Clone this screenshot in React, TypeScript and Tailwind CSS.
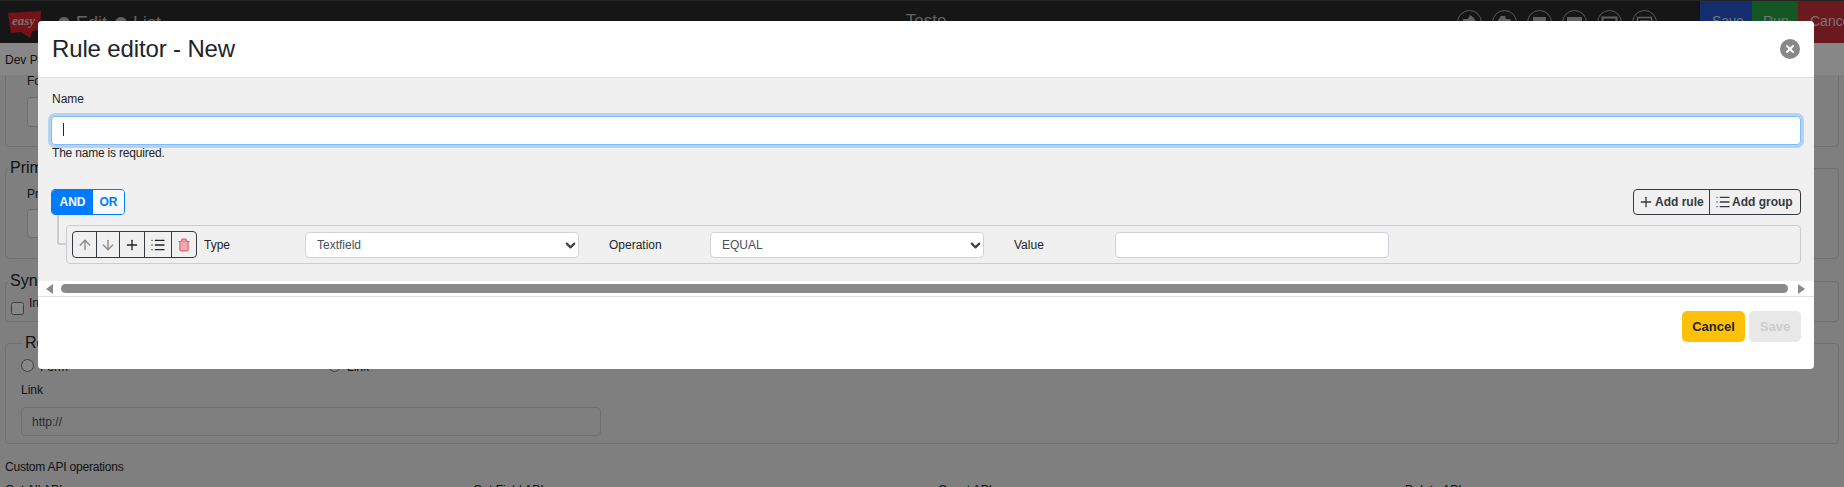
import { ArrowDown, ArrowUp, ChevronDown, List, Plus, Trash2, X } from 'lucide-react';

const TopIcon = ({ children }: { children: React.ReactNode }) => (
  <svg width="25" height="25" viewBox="0 0 25 25" className="shrink-0">
    <circle cx="12.5" cy="12.5" r="12" fill="none" stroke="#a8a8a8" />
    {children}
  </svg>
);

const RuleField = ({ label, children }: { label: string; children: React.ReactNode }) => (
  <div className="flex items-center">
    <span className="w-[101px] text-[12px] text-[#212529]">{label}</span>
    {children}
  </div>
);

const RuleSelect = ({ value }: { value: string }) => (
  <div className="relative">
    <select
      defaultValue={value}
      className="block appearance-none w-[274px] h-[26px] pl-[11px] text-[12px] text-[#495057] bg-white border border-[#ced4da] rounded-[4px]"
    >
      <option>{value}</option>
    </select>
    <ChevronDown size={15} strokeWidth={3.5} className="absolute right-px top-[6px] text-[#444] pointer-events-none" />
  </div>
);

const App = () => {
  return (
    <div className="relative h-screen overflow-hidden bg-[#f0f0f0] text-[12px] text-[#212529] font-['Liberation_Sans',Arial,sans-serif]">
      {/* page behind the modal */}
      <header className="flex h-[43px] bg-[#2a2a2a] border-t border-[#444]">
        <svg width="34" height="28" viewBox="0 0 34 28" className="ml-[8px] mt-[10px] shrink-0">
          <path d="M0 2 L33 0 L32 19 L24 20 L22 27 L13 21 L3 22 Z" fill="#d8262c" />
          <text x="4" y="14" fontSize="13" fontWeight="700" fontStyle="italic" fill="#ecd0d0" fontFamily="Liberation Serif, serif">easy</text>
        </svg>
        <div className="flex items-center ml-[16px] h-[44px] text-[18px] text-[#bbb]">
          <span className="w-[12px] h-[12px] rounded-full bg-[#bbb] mr-[6px]" />
          <span>Edit</span>
          <span className="w-[12px] h-[12px] rounded-full bg-[#bbb] ml-[8px] mr-[6px]" />
          <span>List</span>
        </div>
        <div className="flex-1 text-center text-[17px] text-[#bbb] pt-[7px] pl-[234px]">Teste</div>
        <div className="flex gap-[10px] mt-[9px] mr-[43px]">
          <TopIcon>
            <path d="M6 12 L6 9 L11 9 L13 5 L17 8 L19 12 L19 20 L6 20 Z" fill="#b8b8b8" />
          </TopIcon>
          <TopIcon>
            <path d="M6 10 L9 6 L13 6 L14 9 L18 9 L20 13 L20 20 L6 20 Z" fill="#b8b8b8" />
          </TopIcon>
          <TopIcon>
            <rect x="6" y="7" width="13" height="12" fill="#b8b8b8" />
          </TopIcon>
          <TopIcon>
            <rect x="5" y="7" width="15" height="12" fill="#b8b8b8" />
          </TopIcon>
          <TopIcon>
            <rect x="5.5" y="7.5" width="14" height="11" fill="none" stroke="#b8b8b8" strokeWidth="2" />
          </TopIcon>
          <TopIcon>
            <rect x="5.5" y="7.5" width="14" height="11" fill="none" stroke="#b8b8b8" strokeWidth="1.5" />
            <path d="M8 11 H17 M8 14 H14" stroke="#b8b8b8" strokeWidth="1.5" />
          </TopIcon>
        </div>
        <div className="flex text-[14px] text-[#ddd] overflow-hidden">
          <span className="w-[52px] pl-[12px] pt-[10px] bg-[#2455d1]">Save</span>
          <span className="w-[46px] pl-[11px] pt-[10px] bg-[#28a445]">Run</span>
          <span className="w-[46px] pl-[12px] pt-[10px] bg-[#c9313c] whitespace-nowrap overflow-hidden">Cancel</span>
        </div>
      </header>
      <div className="h-[32px] bg-white pl-[5px] pt-[8px]">Dev Project</div>

      <main className="pl-[5px] pr-[5px]">
        <section className="flex flex-col h-[72px] border border-[#d5d5d5] border-t-0 rounded-b-[4px] pl-[21px]">
          <div className="mt-[-3px]">Form</div>
          <div className="w-[574px] h-[30px] shrink-0 mt-[7px] border border-[#ced4da] rounded-[4px] bg-white" />
        </section>

        <div className="relative mt-[21px] h-[91px] border border-[#d5d5d5] rounded-[4px] pl-[21px] pt-[16px]">
          <span className="absolute left-[2px] top-[-13px] px-[2px] text-[16px] bg-[#f0f0f0]">Primary</span>
          <div>Primary key</div>
          <div className="w-[574px] h-[29px] mt-[6px] border border-[#ced4da] rounded-[4px] bg-white" />
        </div>

        <div className="relative mt-[22px] h-[41px] border border-[#d5d5d5] rounded-[4px] pl-[5px] pt-[19px]">
          <span className="absolute left-[2px] top-[-13px] px-[2px] text-[16px] bg-[#f0f0f0]">Sync</span>
          <label className="flex items-start gap-[5px]">
            <input type="checkbox" className="w-[13px] h-[13px] mt-[1px]" />
            <span className="mt-[-7px]">Include</span>
          </label>
        </div>

        <div className="relative mt-[21px] h-[101px] border border-[#d5d5d5] rounded-[4px] pl-[15px] pt-[15px]">
          <span className="absolute left-[17px] top-[-13px] px-[2px] text-[16px] bg-[#f0f0f0]">Rest</span>
          <div className="flex">
            <label className="flex items-start gap-[6px] w-[307px]">
              <input type="radio" name="rest" className="w-[13px] h-[13px]" />
              <span className="mt-[-1px]">Form</span>
            </label>
            <label className="flex items-start gap-[6px]">
              <input type="radio" name="rest" className="w-[13px] h-[13px]" />
              <span className="mt-[-1px]">Link</span>
            </label>
          </div>
          <div className="mt-[5px]">Link</div>
          <input
            readOnly
            value="http://"
            className="block w-[580px] h-[29px] mt-[8px] px-[10px] text-[12px] text-[#495057] bg-[#f0f0f0] border border-[#ced4da] rounded-[4px]"
          />
        </div>

        <div className="mt-[14px] tracking-[-0.2px]">Custom API operations</div>
        <div className="grid grid-cols-[468px_465px_467px_auto] mt-[5px]">
          <span>Get All API</span>
          <span>Get Field API</span>
          <span>Count API</span>
          <span>Delete API</span>
        </div>
      </main>

      <div className="absolute inset-0 bg-black/47" />

      {/* modal */}
      <div className="absolute left-[38px] top-[21px] w-[1776px] h-[348px] flex flex-col bg-white rounded-[4px] overflow-hidden">
        <div className="flex items-center justify-between h-[57px] pl-[14px] pr-[14px] border-b border-[#dee2e6]">
          <h4 className="pb-[2px] text-[24px] leading-[29px] tracking-[-0.14px] text-[#212529]">Rule editor - New</h4>
          <span className="flex items-center justify-center w-[20px] h-[20px] rounded-full bg-[#888]">
            <X size={12} strokeWidth={4} className="text-white" />
          </span>
        </div>

        <div className="h-[203px] shrink-0 bg-[#f0f0f0] px-[13px] pt-[12px]">
          <label className="block pl-px leading-[18px]">Name</label>
          <div className="relative mt-[8px]">
            <input className="block w-full h-[29px] px-[11px] bg-white border border-[#80bdff] rounded-[4px] shadow-[0_0_0_3px_rgba(0,123,255,0.25)] outline-none" />
            <span className="absolute left-[12px] top-[7px] w-px h-[13px] bg-[#212529]" />
          </div>
          <div className="pl-px leading-[16px] tracking-[-0.2px]">The name is required.</div>

          <div className="relative mt-[28px]">
            <div className="flex items-start justify-between h-[36px]">
              <div className="flex h-[26px] font-bold rounded-[4px] overflow-hidden border border-[#007bff]">
                <span className="flex items-center justify-center w-[41px] bg-[#007bff] text-white">AND</span>
                <span className="flex items-center justify-center w-[31px] bg-[#f8f9fa] text-[#007bff]">OR</span>
              </div>
              <div className="flex h-[26px] font-bold text-[#343a40] border border-[#343a40] rounded-[4px]">
                <span className="flex items-center gap-[1px] w-[76px] pl-[4px] border-r border-[#343a40]">
                  <Plus size={16} />
                  Add rule
                </span>
                <span className="flex items-center gap-[1px] w-[90px] pl-[5px]">
                  <List size={16} />
                  Add group
                </span>
              </div>
            </div>

            <span className="absolute left-[6px] top-[26px] w-[10px] h-[30px] border-l-2 border-b-2 border-[#ccc] rounded-bl-[3px]" />

            <div className="flex items-center ml-[15px] h-[39px] border border-[#ccc] rounded-[4px] pl-[5px]">
              <div className="flex h-[27px] mr-[7px] border border-[#343a40] rounded-[4px]">
                <span className="flex items-center justify-center w-[24px] border-r border-[#343a40] text-[#888]">
                  <ArrowUp size={16} />
                </span>
                <span className="flex items-center justify-center w-[23px] border-r border-[#343a40] text-[#888]">
                  <ArrowDown size={16} />
                </span>
                <span className="flex items-center justify-center w-[25px] border-r border-[#343a40] text-[#212529]">
                  <Plus size={16} />
                </span>
                <span className="flex items-center justify-center w-[27px] border-r border-[#343a40] text-[#212529]">
                  <List size={16} />
                </span>
                <span className="flex items-center justify-center w-[24px] text-[#e0606d]">
                  <Trash2 size={14} fill="#f2a8b0" />
                </span>
              </div>
              <div className="flex gap-[30px]">
                <RuleField label="Type">
                  <RuleSelect value="Textfield" />
                </RuleField>
                <RuleField label="Operation">
                  <RuleSelect value="EQUAL" />
                </RuleField>
                <RuleField label="Value">
                  <input className="w-[274px] h-[26px] bg-white border border-[#ced4da] rounded-[4px]" />
                </RuleField>
              </div>
            </div>
          </div>
        </div>

        <div className="flex items-center h-[15px] shrink-0 pl-[8px] pr-[8px] bg-white">
          <svg width="8" height="10" viewBox="0 0 8 10" className="shrink-0">
            <path d="M7 0 L7 10 L0 5 Z" fill="#8a8a8a" />
          </svg>
          <div className="flex-1 h-[9px] ml-[7px] mr-[10px] rounded-full bg-[#8a8a8a]" />
          <svg width="8" height="10" viewBox="0 0 8 10" className="shrink-0">
            <path d="M0 0 L0 10 L7 5 Z" fill="#8a8a8a" />
          </svg>
        </div>

        <div className="flex justify-end gap-[4px] flex-1 pt-[14px] pr-[13px] border-t border-[#dee2e6] text-[13px] font-bold">
          <button className="w-[63px] h-[31px] bg-[#ffc107] text-[#212529] rounded-[5px]">Cancel</button>
          <button disabled className="w-[52px] h-[31px] bg-[#e8e8e8] text-[#ccc] rounded-[5px]">Save</button>
        </div>
      </div>
    </div>
  );
};

export default App;
